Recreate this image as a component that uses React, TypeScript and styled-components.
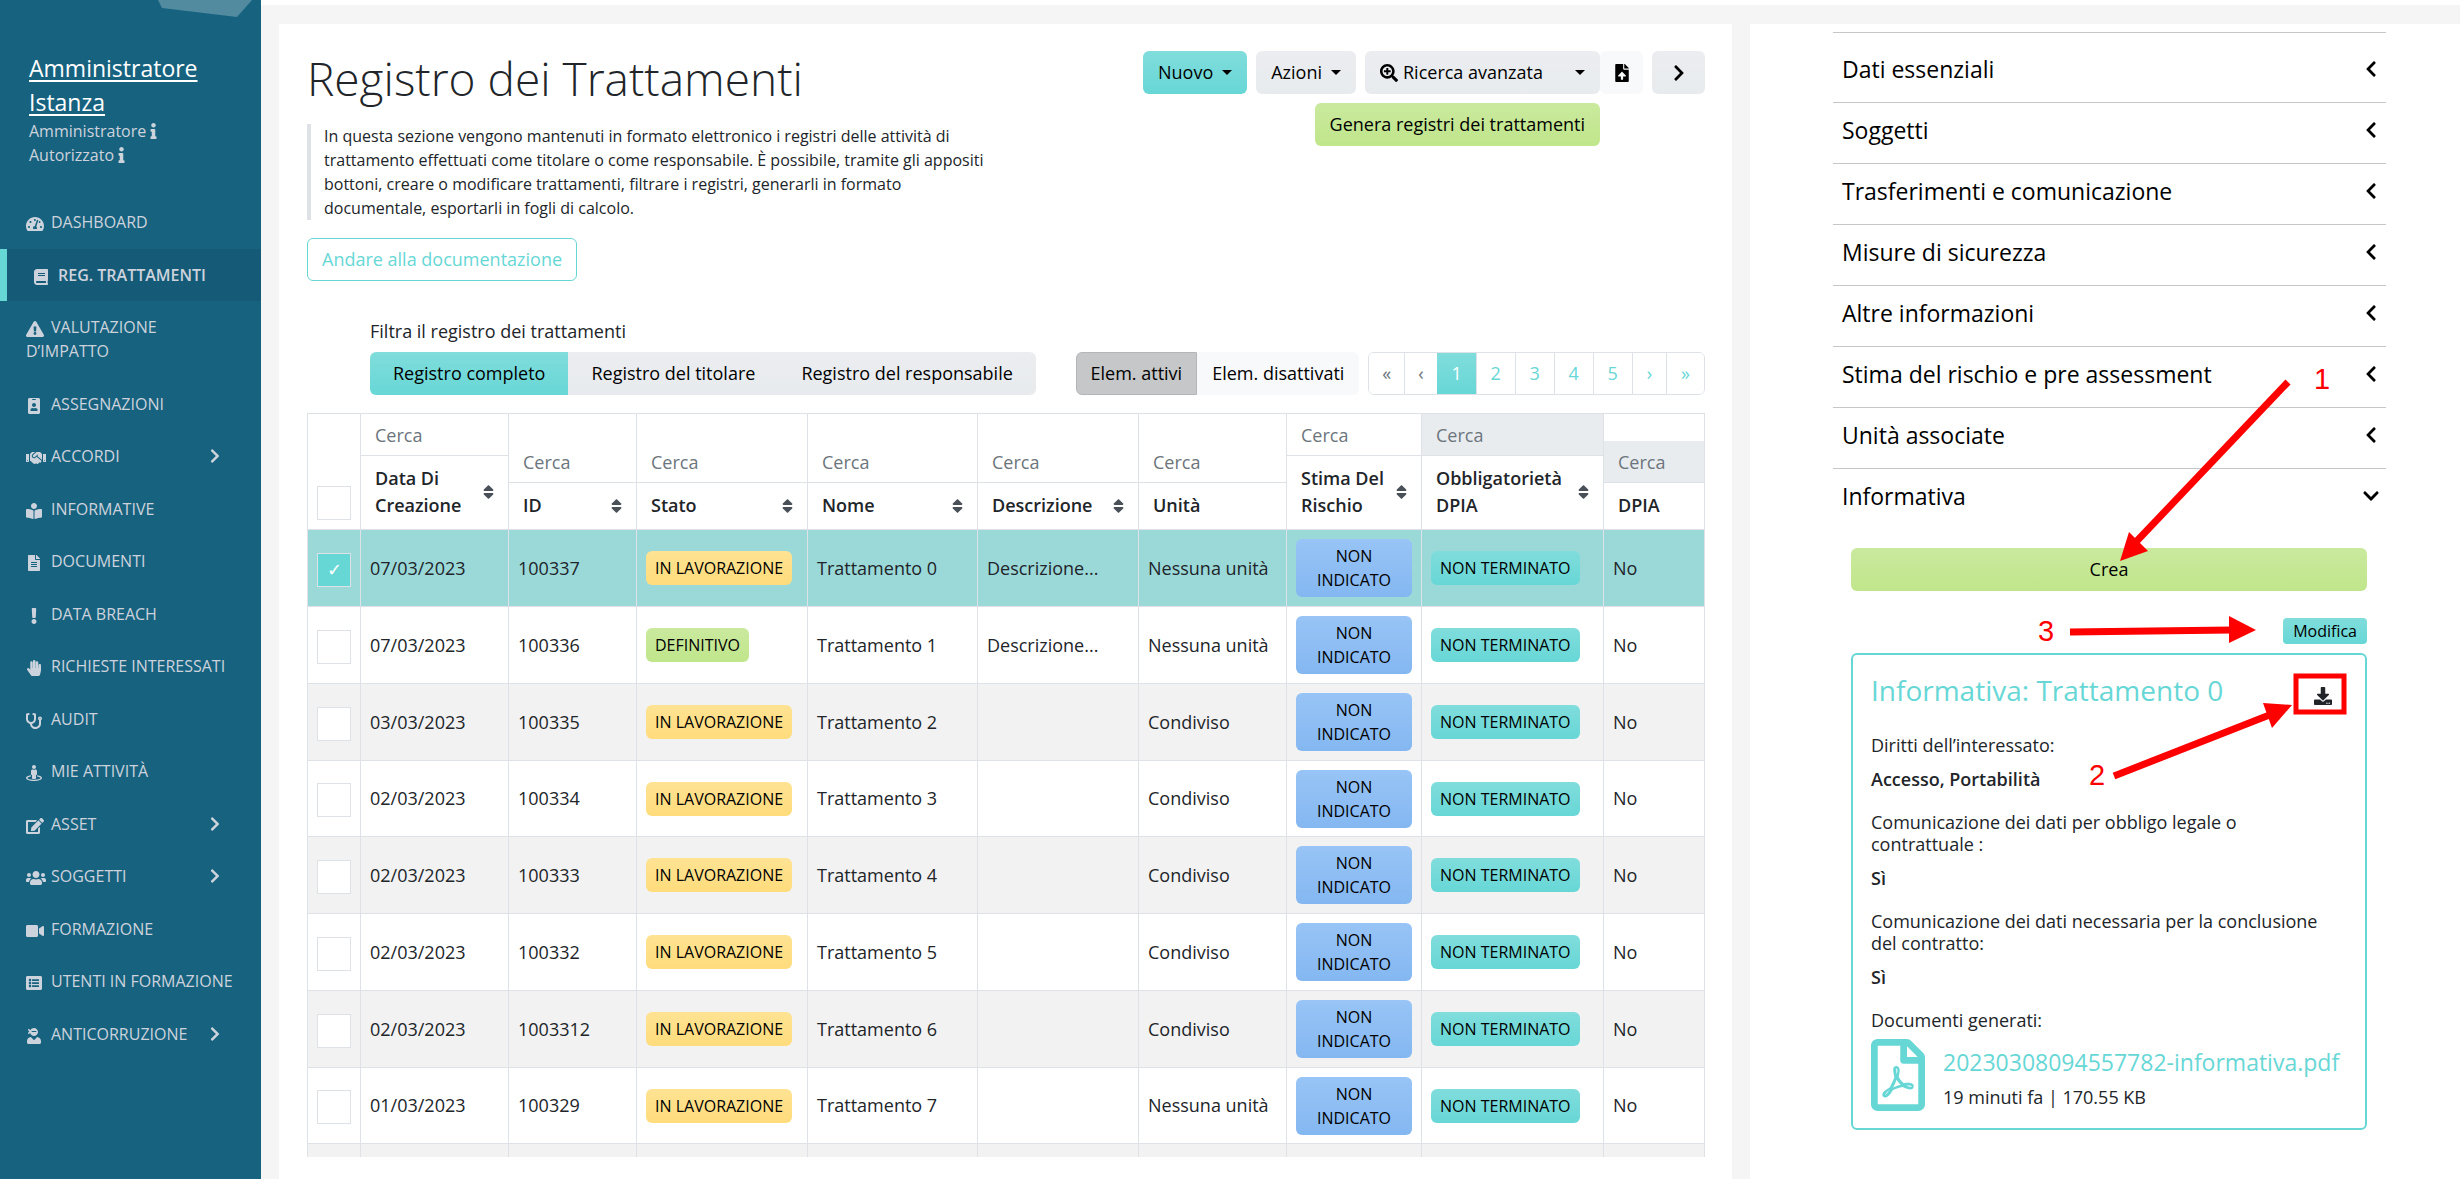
import React from "react";
import styled, { createGlobalStyle, css } from "styled-components";
import {
  FaTachometerAlt, FaBook, FaExclamationTriangle, FaIdBadge, FaHandshake, FaBookReader, FaFileAlt,
  FaExclamation, FaHandPaper, FaStethoscope, FaStreetView, FaEdit, FaUsers, FaVideo, FaListAlt,
  FaUserNinja, FaInfo, FaChevronRight, FaChevronLeft, FaChevronDown, FaSearchPlus, FaFileUpload,
  FaSort, FaDownload, FaRegFilePdf,
} from "react-icons/fa";

const teal = "#67d7d6";
const border = "#dee2e6";
const ink = "#212529";

const Global = createGlobalStyle`
  * { box-sizing: border-box; }
  body { margin: 0; background: #f5f5f5; color: ${ink}; font: 400 18px/27px "Open Sans", "Noto Sans", sans-serif; }
  button, input { font: inherit; color: inherit; }
  h1, h2, h3, p, ul, blockquote { margin: 0; padding: 0; font-weight: 400; }
  ul { list-style: none; }
`;

const Shell = styled.div`
  display: flex;
  height: 100vh;
  overflow: hidden;
`;

const Sidebar = styled.nav`
  position: relative;
  flex: 0 0 261px;
  background: #17627f;
  color: #cdd3dd;
  font-size: 16px;
  line-height: 24px;
`;

const Facet = styled.svg`
  position: absolute;
  top: 0;
  left: 158px;
  width: 94px;
  height: 17px;
`;

const UserBox = styled.div`
  padding: 51px 29px 0;
`;

const UserName = styled.a`
  display: block;
  color: #fff;
  font-size: 23px;
  line-height: 34px;
  text-underline-offset: 3px;
`;

const Role = styled.div`
  display: flex;
  align-items: center;
  gap: 4px;
  svg { width: 7px; height: 16px; }
`;

const Menu = styled.ul`
  margin-top: 29px;
`;

const MenuEntry = styled.li`
  &:nth-child(odd) { padding-bottom: 1px; }
`;

const MenuLink = styled.a<{ $active?: boolean }>`
  display: flex;
  justify-content: space-between;
  align-items: center;
  padding: 14px 41px 14px 26px;
  color: inherit;
  text-decoration: none;
  text-transform: uppercase;
  ${(p) => p.$active && css`
    background: #155b77;
    border-left: 7px solid ${teal};
    font-weight: 600;
  `}
  > svg { width: 10px; height: 16px; flex: none; }
`;

const MenuText = styled.span`
  margin-right: -20px;
`;

const MenuIcon = styled.span<{ $width: number }>`
  display: inline-block;
  width: 16px;
  height: 16px;
  margin-right: 9px;
  text-align: center;
  white-space: nowrap;
  line-height: 16px;
  vertical-align: -2px;
  svg { width: ${(p) => p.$width}px; height: 16px; vertical-align: top; }
`;

const Page = styled.div`
  flex: 1;
  min-width: 0;
  display: flex;
  gap: 18px;
  padding: 19px 0 0 18px;
  border-top: 5px solid #fff;
`;

const Main = styled.main`
  flex: 1;
  min-width: 0;
  display: flex;
  flex-direction: column;
  padding: 27px 27px 22px 28px;
  background: #fff;
`;

const Header = styled.header`
  display: flex;
  justify-content: space-between;
  align-items: flex-start;
`;

const Intro = styled.div`
  flex: 0 1 690px;
`;

const Title = styled.h1`
  font-size: 46px;
  line-height: 54px;
  font-weight: 300;
`;

const Lead = styled.blockquote`
  margin-top: 19px;
  padding: 0 0 0 13px;
  border-left: 4px solid ${border};
  font-size: 16px;
  line-height: 24px;
`;

const tones = {
  teal: ["#80dddc", teal],
  grey: ["#ebedf0", "#e8ebee"],
  light: ["#f8f9fa", "#f8f9fa"],
  green: ["#cae99e", "#c0e68b"],
  yellow: ["#ffe393", "#ffdc7c"],
  blue: ["#98c4f6", "#84b7f1"],
  pressed: ["#c6c7c8", "#c6c7c8"],
};
type Tone = keyof typeof tones;

const tone = css<{ $tone: Tone }>`
  color: #000;
  background: linear-gradient(${(p) => tones[p.$tone][0]}, ${(p) => tones[p.$tone][1]}) border-box;
`;

const Button = styled.button<{ $tone: Tone }>`
  ${tone}
  display: inline-flex;
  align-items: center;
  justify-content: center;
  gap: 5px;
  height: 43px;
  padding: 0 14px;
  border: 1px solid ${(p) => (p.$tone === "pressed" ? "#b5b6b7" : "transparent")};
  border-radius: 6px;
  white-space: nowrap;
  svg { width: 18px; height: 18px; flex: none; }
`;

const DocLink = styled.a`
  display: inline-block;
  margin-top: 18px;
  padding: 7px 14px;
  border: 1px solid ${teal};
  border-radius: 6px;
  color: ${teal};
  text-decoration: none;
`;

const Actions = styled.div`
  display: flex;
  flex-direction: column;
  align-items: flex-end;
  gap: 9px;
`;

const ActionRow = styled.div`
  display: flex;
  gap: 9px;
`;

const SearchButton = styled(Button)`
  width: 235px;
  justify-content: flex-start;
`;

const GenerateButton = styled(Button)`
  margin-right: 105px;
`;

const UploadButton = styled(Button)`
  width: 43px;
  padding: 0;
`;

const ExpandButton = styled(Button)`
  width: 53px;
  padding: 0;
`;

const Joined = styled.div`
  display: flex;
`;

const Caret = styled.span`
  margin-left: 4px;
  border: 5px solid transparent;
  border-top-color: currentColor;
  border-bottom: 0;
`;

const EndCaret = styled(Caret)`
  margin-left: auto;
`;

const FilterLabel = styled.div`
  margin: 37px 0 7px 63px;
`;

const FilterBar = styled.div`
  display: flex;
  align-items: center;
  margin: 0 0 18px 63px;
`;

const Segments = styled.div<{ $pad: number }>`
  display: flex;
  ${Button} { border-radius: 0; padding: 0 ${(p) => p.$pad}px; }
  ${Button}:first-child { border-radius: 6px 0 0 6px; }
  ${Button}:last-child { border-radius: 0 6px 6px 0; }
`;

const FilterEnd = styled.div`
  display: flex;
  gap: 9px;
  margin-left: auto;
`;

const Pager = styled.nav`
  display: flex;
  border: 1px solid ${border};
  border-radius: 6px;
  overflow: hidden;
`;

const PageLink = styled.button<{ $current?: boolean; $muted?: boolean; $digit?: boolean }>`
  height: 41px;
  padding: 0 ${(p) => (p.$muted ? 13 : 14)}px;
  border: 0;
  border-left: 1px solid ${border};
  background: #fff;
  color: ${(p) => (p.$muted ? "#6c757d" : teal)};
  &:first-child { border-left: 0; }
  ${(p) => p.$digit && css`
    width: 39px;
    padding: 0;
  `}
  ${(p) => p.$current && css`
    color: #fff;
    background: linear-gradient(#80dddc, ${teal}) border-box;
    border-left-color: transparent;
  `}
`;

const TableFrame = styled.div`
  flex: 1;
  min-height: 0;
  overflow: hidden;
`;

const Table = styled.table`
  width: 100%;
  border-collapse: collapse;
  table-layout: fixed;
`;

const Head = styled.th`
  height: 116px;
  padding: 0;
  border: 1px solid ${border};
  vertical-align: bottom;
  text-align: left;
  font-weight: 600;
`;

const CheckHead = styled(Head)`
  padding: 0 9px 9px;
`;

const Search = styled.input<{ $disabled?: boolean }>`
  display: block;
  width: 100%;
  height: 41px;
  padding: 0 14px;
  border: 0;
  border-radius: 0;
  background: ${(p) => (p.$disabled ? "#e9ecef" : "#fff")};
  font-weight: 400;
  &::placeholder { color: #6c757d; opacity: 1; }
`;

const HeadLabel = styled.div`
  display: flex;
  align-items: center;
  justify-content: space-between;
  padding: 9px 14px 10px;
  border-top: 1px solid ${border};
  svg { width: 11px; height: 18px; flex: none; color: #495057; }
`;

const Cell = styled.td`
  height: 77px;
  padding: 0 9px;
  border: 1px solid ${border};
  white-space: nowrap;
`;

const Row = styled.tr`
  background: #fff;
  &:nth-child(odd) { background: #f2f2f2; }
  &&:first-child { background: #9bd9d9; }
  &:nth-child(4n) ${Cell} { height: 76px; }
`;

const Check = styled.input`
  display: grid;
  place-items: center;
  appearance: none;
  width: 34px;
  height: 34px;
  margin: 0;
  border: 1px solid ${border};
  background: #fff;
  &:checked { background: ${teal}; }
  &:checked::after { content: "✓"; color: #fff; font-size: 18px; }
  td & { margin-top: 3px; }
`;

const Badge = styled.span<{ $tone: Tone }>`
  ${tone}
  display: inline-block;
  padding: 5px 9px;
  border-radius: 6px;
  font-size: 16px;
  line-height: 24px;
  text-align: center;
  vertical-align: middle;
`;

const WideBadge = styled(Badge)`
  display: block;
  white-space: normal;
`;

const Detail = styled.aside`
  position: relative;
  flex: 0 0 710px;
  padding: 8px 74px 0 83px;
  background: #fff;
`;

const Accordion = styled.ul`
  padding-top: 9px;
  border-top: 1px solid #c4c6c8;
`;

const AccordionItem = styled.li`
  &:not(:last-child) { border-bottom: 1px solid #c4c6c8; }
`;

const AccordionButton = styled.button`
  display: flex;
  justify-content: space-between;
  align-items: center;
  width: 100%;
  height: 60px;
  padding: 0 6px 6px 9px;
  border: 0;
  background: none;
  color: #000;
  font-size: 23px;
  svg { width: 18px; height: 18px; }
`;

const Sheet = styled.section`
  display: flex;
  flex-direction: column;
  padding: 19px 19px 0 18px;
`;

const SmallButton = styled(Button)`
  align-self: flex-end;
  height: 26px;
  margin: 27px 0 9px;
  padding: 0 9px;
  border-radius: 4px;
  font-size: 16px;
`;

const Notice = styled.article`
  padding: 16px 24px 17px 18px;
  border: 2px solid ${teal};
  border-radius: 6px;
`;

const NoticeHead = styled.div`
  display: flex;
  justify-content: space-between;
  margin-bottom: 25px;
`;

const NoticeTitle = styled.h2`
  color: ${teal};
  font-size: 28px;
  line-height: 38px;
`;

const IconButton = styled.button`
  align-self: flex-end;
  display: flex;
  margin: 0 9px 4px 0;
  padding: 0;
  border: 0;
  background: none;
  svg { width: 18px; height: 18px; }
`;

const Question = styled.p`
  line-height: 22px;
`;

const Answer = styled.p`
  margin: 12px 0 21px;
  line-height: 22px;
  font-weight: 600;
`;

const FileRow = styled.div`
  display: flex;
  align-items: flex-end;
  gap: 18px;
  margin-top: 8px;
  > svg { width: 54px; height: 72px; color: ${teal}; flex: none; }
`;

const FileLink = styled.a`
  display: block;
  margin-bottom: 5px;
  color: ${teal};
  font-size: 23px;
  line-height: 34px;
  text-decoration: none;
  white-space: nowrap;
`;

const Annotations = styled.svg`
  position: absolute;
  top: 0;
  left: 0;
  width: 710px;
  height: 1155px;
  pointer-events: none;
  text { font: 29px "Liberation Sans", Arial, sans-serif; fill: #f00; }
  line { stroke: #f00; stroke-width: 7px; }
  polygon { fill: #f00; }
  rect { fill: none; stroke: #f00; stroke-width: 5px; }
`;

const menu: { label: string; icon: React.ReactNode; width?: number; active?: boolean; more?: boolean }[] = [
  { label: "Dashboard", icon: <FaTachometerAlt />, width: 18 },
  { label: "Reg. trattamenti", icon: <FaBook />, active: true },
  { label: "Valutazione d’impatto", icon: <FaExclamationTriangle />, width: 18 },
  { label: "Assegnazioni", icon: <FaIdBadge /> },
  { label: "Accordi", icon: <FaHandshake />, width: 20, more: true },
  { label: "Informative", icon: <FaBookReader /> },
  { label: "Documenti", icon: <FaFileAlt /> },
  { label: "Data breach", icon: <FaExclamation /> },
  { label: "Richieste interessati", icon: <FaHandPaper /> },
  { label: "Audit", icon: <FaStethoscope /> },
  { label: "Mie attività", icon: <FaStreetView /> },
  { label: "Asset", icon: <FaEdit />, width: 18, more: true },
  { label: "Soggetti", icon: <FaUsers />, width: 20, more: true },
  { label: "Formazione", icon: <FaVideo />, width: 18 },
  { label: "Utenti in formazione", icon: <FaListAlt /> },
  { label: "Anticorruzione", icon: <FaUserNinja />, more: true },
];

const columns: { label: string; width?: number; sort?: boolean; off?: boolean }[] = [
  { label: "Data Di Creazione", width: 148, sort: true },
  { label: "ID", width: 128, sort: true },
  { label: "Stato", width: 171, sort: true },
  { label: "Nome", width: 170, sort: true },
  { label: "Descrizione", width: 161, sort: true },
  { label: "Unità", width: 148 },
  { label: "Stima Del Rischio", width: 135, sort: true },
  { label: "Obbligatorietà DPIA", width: 182, sort: true, off: true },
  { label: "DPIA", off: true },
];

const rows = [
  ["07/03/2023", "100337", "IN LAVORAZIONE", "Trattamento 0", "Descrizione...", "Nessuna unità"],
  ["07/03/2023", "100336", "DEFINITIVO", "Trattamento 1", "Descrizione...", "Nessuna unità"],
  ["03/03/2023", "100335", "IN LAVORAZIONE", "Trattamento 2", "", "Condiviso"],
  ["02/03/2023", "100334", "IN LAVORAZIONE", "Trattamento 3", "", "Condiviso"],
  ["02/03/2023", "100333", "IN LAVORAZIONE", "Trattamento 4", "", "Condiviso"],
  ["02/03/2023", "100332", "IN LAVORAZIONE", "Trattamento 5", "", "Condiviso"],
  ["02/03/2023", "1003312", "IN LAVORAZIONE", "Trattamento 6", "", "Condiviso"],
  ["01/03/2023", "100329", "IN LAVORAZIONE", "Trattamento 7", "", "Nessuna unità"],
];

const sections = [
  "Dati essenziali", "Soggetti", "Trasferimenti e comunicazione", "Misure di sicurezza",
  "Altre informazioni", "Stima del rischio e pre assessment", "Unità associate", "Informativa",
];

const pages = ["«", "‹", "1", "2", "3", "4", "5", "›", "»"];

export default function App() {
  return (
    <Shell>
      <Global />
      <Sidebar>
        <Facet viewBox="0 0 94 17"><polygon points="0,0 94,0 79,17 4,8" fill="#528ba0" /></Facet>
        <UserBox>
          <UserName href="#">Amministratore Istanza</UserName>
          <Role>Amministratore <FaInfo /></Role>
          <Role>Autorizzato <FaInfo /></Role>
        </UserBox>
        <Menu>
          {menu.map((m) => (
            <MenuEntry key={m.label}>
              <MenuLink href="#" $active={m.active}>
                <MenuText><MenuIcon $width={m.width ?? 16}>{m.icon}</MenuIcon>{m.label}</MenuText>
                {m.more && <FaChevronRight />}
              </MenuLink>
            </MenuEntry>
          ))}
        </Menu>
      </Sidebar>
      <Page>
        <Main>
          <Header>
            <Intro>
              <Title>Registro dei Trattamenti</Title>
              <Lead>
                In questa sezione vengono mantenuti in formato elettronico i registri delle attività di
                trattamento effettuati come titolare o come responsabile. È possibile, tramite gli appositi
                bottoni, creare o modificare trattamenti, filtrare i registri, generarli in formato
                documentale, esportarli in fogli di calcolo.
              </Lead>
              <DocLink href="#">Andare alla documentazione</DocLink>
            </Intro>
            <Actions>
              <ActionRow>
                <Button $tone="teal">Nuovo <Caret /></Button>
                <Button $tone="grey">Azioni <Caret /></Button>
                <Joined>
                  <SearchButton $tone="grey"><FaSearchPlus /> Ricerca avanzata <EndCaret /></SearchButton>
                  <UploadButton $tone="light" aria-label="Carica file"><FaFileUpload /></UploadButton>
                </Joined>
                <ExpandButton $tone="grey" aria-label="Espandi"><FaChevronRight /></ExpandButton>
              </ActionRow>
              <GenerateButton $tone="green">Genera registri dei trattamenti</GenerateButton>
            </Actions>
          </Header>
          <FilterLabel>Filtra il registro dei trattamenti</FilterLabel>
          <FilterBar>
            <Segments $pad={22}>
              <Button $tone="teal">Registro completo</Button>
              <Button $tone="grey">Registro del titolare</Button>
              <Button $tone="grey">Registro del responsabile</Button>
            </Segments>
            <FilterEnd>
              <Segments $pad={14}>
                <Button $tone="pressed">Elem. attivi</Button>
                <Button $tone="light">Elem. disattivati</Button>
              </Segments>
              <Pager aria-label="Pagine">
                {pages.map((p, i) => (
                  <PageLink key={p} $current={p === "1"} $muted={i < 2} $digit={i > 1 && i < 7}>{p}</PageLink>
                ))}
              </Pager>
            </FilterEnd>
          </FilterBar>
          <TableFrame>
            <Table>
              <colgroup>
                <col style={{ width: 53 }} />
                {columns.map((c) => <col key={c.label} style={{ width: c.width }} />)}
              </colgroup>
              <thead>
                <tr>
                  <CheckHead><Check type="checkbox" aria-label="Seleziona tutti" /></CheckHead>
                  {columns.map((c) => (
                    <Head key={c.label}>
                      <Search placeholder="Cerca" aria-label={c.label} disabled={c.off} $disabled={c.off} />
                      <HeadLabel>{c.label}{c.sort && <FaSort />}</HeadLabel>
                    </Head>
                  ))}
                </tr>
              </thead>
              <tbody>
                {rows.map(([date, id, state, name, desc, unit], i) => (
                  <Row key={id}>
                    <Cell><Check type="checkbox" defaultChecked={i === 0} aria-label={name} /></Cell>
                    <Cell>{date}</Cell>
                    <Cell>{id}</Cell>
                    <Cell><Badge $tone={state === "DEFINITIVO" ? "green" : "yellow"}>{state}</Badge></Cell>
                    <Cell>{name}</Cell>
                    <Cell>{desc}</Cell>
                    <Cell>{unit}</Cell>
                    <Cell><WideBadge $tone="blue">NON INDICATO</WideBadge></Cell>
                    <Cell><Badge $tone="teal">NON TERMINATO</Badge></Cell>
                    <Cell>No</Cell>
                  </Row>
                ))}
                <Row>{Array.from({ length: 10 }, (_, i) => <Cell key={i} />)}</Row>
              </tbody>
            </Table>
          </TableFrame>
        </Main>
        <Detail>
          <Accordion>
            {sections.map((s, i) => {
              const open = i === sections.length - 1;
              return (
                <AccordionItem key={s}>
                  <AccordionButton aria-expanded={open}>
                    {s}{open ? <FaChevronDown /> : <FaChevronLeft />}
                  </AccordionButton>
                </AccordionItem>
              );
            })}
          </Accordion>
          <Sheet>
            <Button $tone="green">Crea</Button>
            <SmallButton $tone="teal">Modifica</SmallButton>
            <Notice>
              <NoticeHead>
                <NoticeTitle>Informativa: Trattamento 0</NoticeTitle>
                <IconButton aria-label="Scarica"><FaDownload /></IconButton>
              </NoticeHead>
              <Question>Diritti dell’interessato:</Question>
              <Answer>Accesso, Portabilità</Answer>
              <Question>Comunicazione dei dati per obbligo legale o contrattuale :</Question>
              <Answer>Sì</Answer>
              <Question>Comunicazione dei dati necessaria per la conclusione del contratto:</Question>
              <Answer>Sì</Answer>
              <Question>Documenti generati:</Question>
              <FileRow>
                <FaRegFilePdf />
                <div>
                  <FileLink href="#">20230308094557782-informativa.pdf</FileLink>
                  <p>19 minuti fa | 170.55 KB</p>
                </div>
              </FileRow>
            </Notice>
          </Sheet>
          <Annotations viewBox="0 0 710 1155">
            <text x="564" y="365">1</text>
            <line x1="538" y1="358" x2="384" y2="520" />
            <polygon points="370,537 379,508 398,527" />
            <text x="288" y="617">3</text>
            <line x1="320" y1="608" x2="482" y2="606" />
            <polygon points="506,606 479,592 479,619" />
            <text x="339" y="761">2</text>
            <line x1="364" y1="752" x2="522" y2="690" />
            <polygon points="542,681 513,679 522,704" />
            <rect x="546" y="652" width="48" height="36" />
          </Annotations>
        </Detail>
      </Page>
    </Shell>
  );
}
